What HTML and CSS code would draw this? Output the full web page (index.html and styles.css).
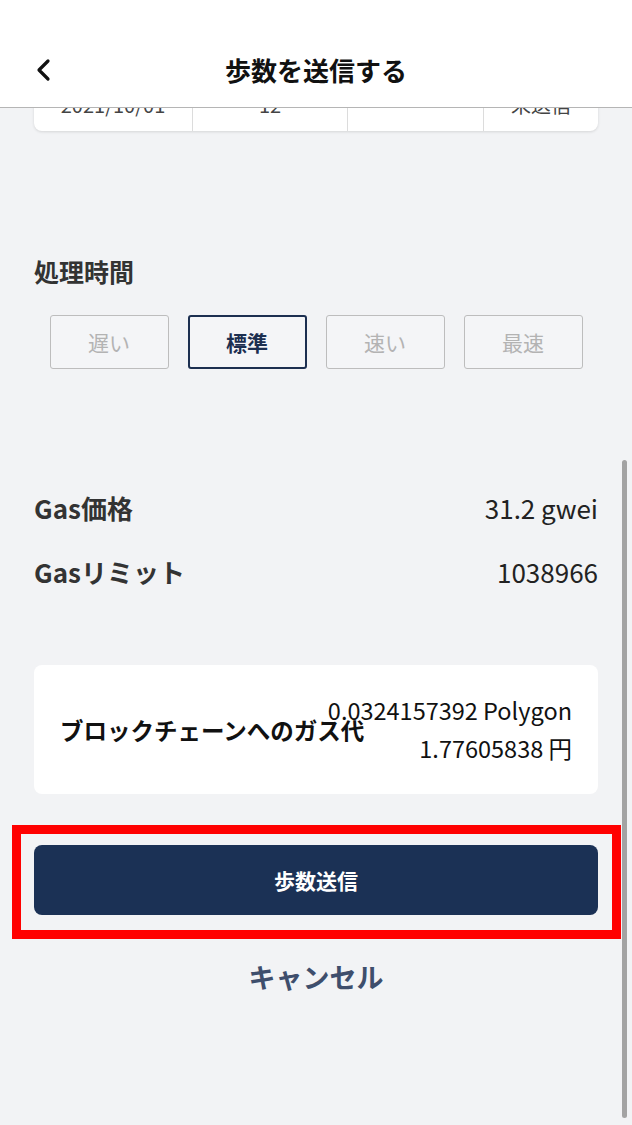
FILE: index.html
```html
<!DOCTYPE html>
<html lang="ja">
<head>
    <meta charset="UTF-8">
    <meta name="viewport" content="width=device-width, initial-scale=1.0">
    <title>歩数を送信する</title>
    <link rel="stylesheet" href="styles.css">
</head>
<body>

    <header class="topbar">
        <div class="topbar-inner">
            <button class="back" aria-label="戻る">
                <svg width="20" height="24" viewBox="0 0 20 24">
                    <path d="M14 3 L5 12 L14 21" fill="none" stroke="#111" stroke-width="3.2" stroke-linecap="round" stroke-linejoin="round"/>
                </svg>
            </button>
            <h1 class="title">歩数を送信する</h1>
        </div>
    </header>

    <main class="content">
        <!-- history table, scrolled mostly under the header -->
        <div class="history-card">
            <div class="history-cell c1">2021/10/01</div>
            <div class="history-cell c2">12</div>
            <div class="history-cell c3"></div>
            <div class="history-cell c4">未送信</div>
        </div>

        <section class="speed">
            <h3 class="section-title">処理時間</h3>
            <div class="speed-options">
                <button class="speed-btn">遅い</button>
                <button class="speed-btn selected">標準</button>
                <button class="speed-btn">速い</button>
                <button class="speed-btn">最速</button>
            </div>
        </section>

        <div class="gas">
            <div class="gas-row">
                <span class="gas-label">Gas価格</span>
                <span class="gas-value">31.2 gwei</span>
            </div>
            <div class="gas-row">
                <span class="gas-label">Gasリミット</span>
                <span class="gas-value">1038966</span>
            </div>
        </div>

        <div class="fee-card">
            <span class="fee-label">ブロックチェーンへのガス代</span>
            <div class="fee-values">
                <span>0.0324157392 Polygon</span>
                <span>1.77605838 円</span>
            </div>
        </div>

        <div class="highlight">
            <button class="submit">歩数送信</button>
        </div>

        <button class="cancel">キャンセル</button>
    </main>

    <div class="scrollbar"></div>

</body>
</html>
```

FILE: styles.css
```css
body {
    margin: 0;
    width: 632px;
    height: 1125px;
    overflow: hidden;
    position: relative;
    background-color: #f2f3f5;
    font-family: "Noto Sans CJK JP", "Noto Sans", sans-serif;
    color: #333;
}
button {
    font-family: inherit;
    cursor: pointer;
}

/* Header */
.topbar {
    position: relative;
    z-index: 2;
    height: 107px;
    background: #fff;
    border-bottom: 1px solid #b5b5b5;
}
.topbar-inner {
    position: relative;
    display: flex;
    align-items: center;
    justify-content: center;
    padding-top: 34px;
    height: 72px;
}
.back {
    position: absolute;
    left: 34px;
    top: 58px;
    padding: 0;
    border: none;
    background: none;
    line-height: 0;
}
.title {
    margin: 0;
    font-size: 26px;
    font-weight: 700;
    color: #111;
    line-height: 36px;
}

.content {
    padding: 0 34px;
}

/* Table row hidden under the header */
.history-card {
    display: flex;
    margin-top: -29px;
    background: #fff;
    border-radius: 0 0 8px 8px;
    box-shadow: 0 1px 3px rgba(0, 0, 0, 0.12);
}
.history-cell {
    padding: 13px 0;
    line-height: 26px;
    height: 26px;
    font-size: 20px;
    text-align: center;
    color: #444;
    border-right: 1px solid #dcdcdc;
}
.history-cell:last-child {
    border-right: none;
}
.c1 { width: 158px; }
.c2 { width: 154px; }
.c3 { width: 135px; }
.c4 { flex: 1; }

/* Speed */
.speed {
    margin-top: 124px;
}
.section-title {
    margin: 0;
    font-size: 25px;
    font-weight: 700;
    line-height: 32px;
    color: #333;
}
.speed-options {
    display: flex;
    justify-content: center;
    gap: 19px;
    margin-top: 28px;
}
.speed-btn {
    width: 119px;
    height: 54px;
    padding: 0;
    background: #f4f5f7;
    border: 1.5px solid #bdbdbd;
    border-radius: 3px;
    font-size: 21px;
    color: #b3b3b3;
}
.speed-btn.selected {
    border: 2px solid #1c2f50;
    color: #1c2f50;
    font-weight: 700;
}

/* Gas */
.gas {
    margin-top: 121px;
    display: flex;
    flex-direction: column;
    gap: 28px;
}
.gas-row {
    display: flex;
    justify-content: space-between;
    line-height: 36px;
    font-size: 26px;
}
.gas-label {
    font-weight: 700;
    color: #333;
}
.gas-value {
    color: #222;
}

/* Fee card */
.fee-card {
    display: grid;
    margin-top: 75px;
    height: 129px;
    padding: 0 26px;
    background: #fff;
    border-radius: 8px;
    font-size: 23.5px;
    color: #111;
}
.fee-label,
.fee-values {
    grid-area: 1 / 1;
    align-self: center;
}
.fee-label {
    font-weight: 700;
    justify-self: start;
}
.fee-values {
    justify-self: end;
    display: flex;
    flex-direction: column;
    align-items: flex-end;
    line-height: 38px;
    margin-top: -2px;
}

/* Submit (red annotation frame) */
.highlight {
    margin: 31px -23px 0 -22px;
    padding: 11px 14px 15px 13px;
    border: 9px solid #ff0000;
}
.submit {
    display: block;
    width: 100%;
    height: 70px;
    border: none;
    border-radius: 8px;
    background: #1b3155;
    color: #fff;
    font-size: 21px;
    font-weight: 700;
}

.cancel {
    display: block;
    margin: 20px auto 0;
    padding: 0;
    border: none;
    background: none;
    font-size: 27px;
    font-weight: 700;
    line-height: 36px;
    color: #3e4e6c;
}

.scrollbar {
    position: absolute;
    left: 622px;
    top: 460px;
    width: 5px;
    height: 658px;
    border-radius: 3px;
    background: #a3a3a3;
}
```
